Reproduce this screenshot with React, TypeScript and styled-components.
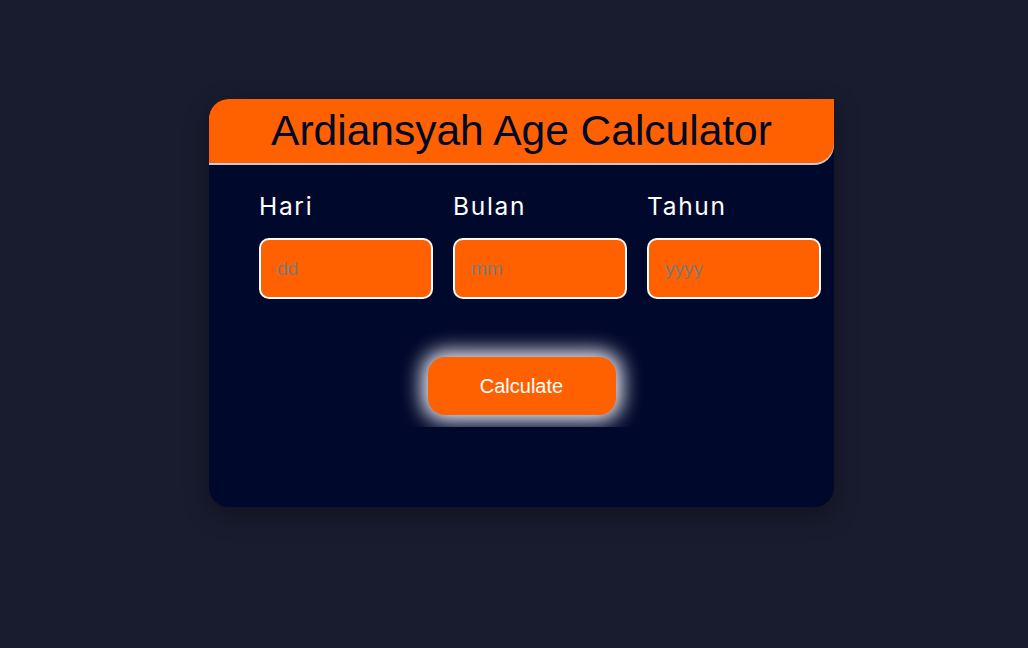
import React from "react";
import styled, { createGlobalStyle } from "styled-components";

const Global = createGlobalStyle`
  html, body { margin: 0; padding: 0; background: #191c2f; }
  body { font-family: "Liberation Sans", Arial, sans-serif; }
  * { box-sizing: border-box; }
`;

const Page = styled.div`
  min-height: 648px;
  padding: 99px 0 0 209px;
`;

const Card = styled.div`
  width: 625px;
  height: 408px;
  background: #00082b;
  border-radius: 20px 0 20px 20px;
  box-shadow: 0 8px 24px rgba(0, 0, 0, 0.35);
  display: flex;
  flex-direction: column;
`;

const Header = styled.div`
  height: 64px;
  background: #ff6100;
  border-radius: 20px 0 20px 0;
  box-shadow: 0 2px 0 #c9c9d2;
  display: flex;
  align-items: center;
  justify-content: center;
`;

const Title = styled.h1`
  margin: 0;
  font-family: "Liberation Sans", Arial, sans-serif;
  font-weight: 400;
  font-size: 42.5px;
  color: #00082b;
  line-height: 1;
`;

const Fields = styled.div`
  display: grid;
  grid-template-columns: repeat(3, 174px);
  column-gap: 20px;
  padding: 28px 0 0 50px;
`;

const Field = styled.label`
  display: flex;
  flex-direction: column;
  gap: 17px;
`;

const Label = styled.span`
  font-family: "Inter", "Open Sans", sans-serif;
  font-size: 24.5px;
  line-height: 30px;
  color: #ffffff;
  letter-spacing: 1.7px;
`;

const Input = styled.input`
  width: 174px;
  height: 61px;
  border: 2px solid #ffffff;
  border-radius: 10px;
  background: #ff6100;
  padding: 0 16px;
  font-family: "Liberation Sans", Arial, sans-serif;
  font-size: 19px;
  color: #333;
  outline: none;
  &::placeholder { color: #7a7a7a; }
`;

const ButtonRow = styled.div`
  display: flex;
  justify-content: center;
  padding: 58px 0 12px;
  overflow: hidden;
`;

const Button = styled.button`
  width: 188px;
  height: 58px;
  border: none;
  border-radius: 17px;
  background: #ff6100;
  color: #ffffff;
  font-family: "Liberation Sans", Arial, sans-serif;
  font-size: 20px;
  box-shadow: 0 0 20px 6px rgba(240, 242, 250, 1);
  cursor: pointer;
`;

export default function App() {
  return (
    <>
      <Global />
      <Page>
        <Card>
          <Header>
            <Title>Ardiansyah Age Calculator</Title>
          </Header>
          <Fields>
            <Field>
              <Label>Hari</Label>
              <Input placeholder="dd" />
            </Field>
            <Field>
              <Label>Bulan</Label>
              <Input placeholder="mm" />
            </Field>
            <Field>
              <Label>Tahun</Label>
              <Input placeholder="yyyy" />
            </Field>
          </Fields>
          <ButtonRow>
            <Button>Calculate</Button>
          </ButtonRow>
        </Card>
      </Page>
    </>
  );
}
